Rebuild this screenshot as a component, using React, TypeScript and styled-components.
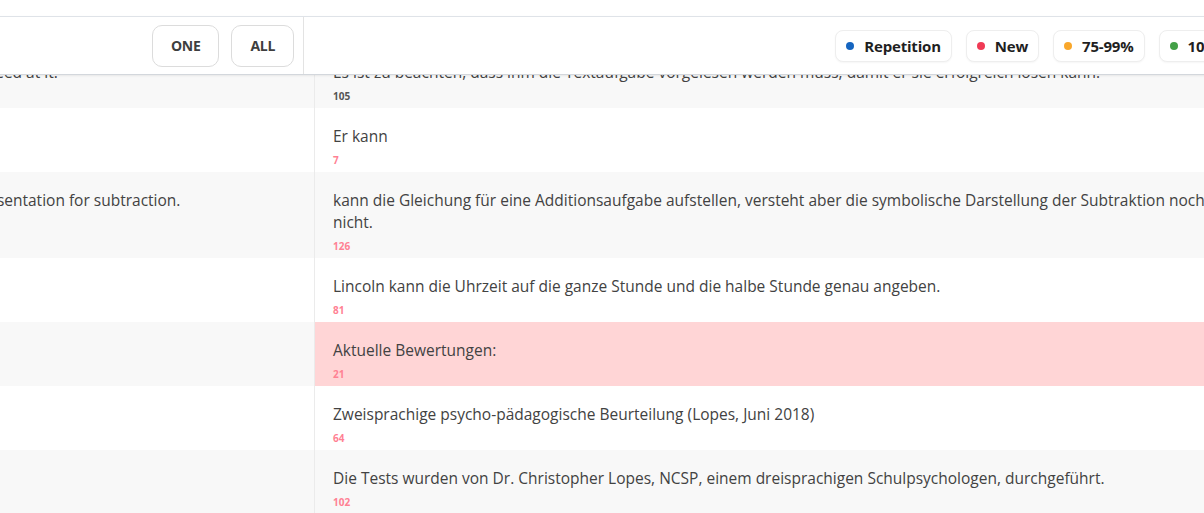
import React, { useLayoutEffect, useRef } from "react";
import styled, { createGlobalStyle } from "styled-components";

const SCROLL_X = 717;
const SCROLL_Y = 31;
const VISIBLE_RIGHT = 1250;
const HEAD_LEFT = 303;
const BODY_LEFT = 314;

const GlobalStyle = createGlobalStyle`
  * { box-sizing: border-box; }
  html, body { margin: 0; padding: 0; background: #ffffff; }
  body {
    font-family: "Open Sans", "Noto Sans", sans-serif;
    color: #444;
    -webkit-font-smoothing: antialiased;
  }
`;

const Scroller = styled.div`
  height: 100vh;
  width: 100vw;
  overflow: auto;
  scrollbar-width: none;
  &::-webkit-scrollbar { display: none; }
`;

const Canvas = styled.div<{ $width: number }>`
  width: ${(p) => p.$width}px;
`;

const StickyHead = styled.header`
  position: sticky;
  top: 0;
  z-index: 2;
  background: #fff;
  padding-top: 16px;
`;

const Toolbar = styled.div<{ $left: number }>`
  display: grid;
  grid-template-columns: ${(p) => p.$left}px 1fr;
  height: 59px;
  border-top: 1px solid #dfe3e8;
  border-bottom: 1px solid #d3d7dc;
  box-shadow: 0 1px 2px rgba(0, 0, 0, 0.07);
  background: #fff;
`;

const ModeGroup = styled.div`
  display: flex;
  align-items: center;
  justify-content: flex-end;
  gap: 12px;
  padding-right: 9px;
  border-right: 1px solid #e3e3e3;
`;

const ModeButton = styled.button`
  height: 42px;
  padding: 0 18px;
  border: 1px solid #dcdcdc;
  border-radius: 10px;
  background: #fff;
  font-family: "Open Sans", sans-serif;
  font-weight: 700;
  font-size: 14px;
  color: #3e3e3e;
  letter-spacing: -0.3px;
  cursor: pointer;
`;

const Legend = styled.div`
  display: flex;
  align-items: center;
  justify-content: flex-end;
  gap: 14px;
  padding-right: 13px;
`;

const Chip = styled.div`
  display: flex;
  align-items: center;
  gap: 10px;
  height: 32px;
  padding: 0 10px;
  border: 1px solid #eeeeee;
  border-radius: 8px;
  background: #fff;
  box-shadow: 0 1px 2px rgba(0, 0, 0, 0.04);
  font-weight: 700;
  font-size: 15px;
  color: #1f1f1f;
  letter-spacing: -0.2px;
`;

const Dot = styled.span<{ $color: string }>`
  width: 8px;
  height: 8px;
  border-radius: 50%;
  background: ${(p) => p.$color};
  flex: none;
`;

const Table = styled.div<{ $left: number }>`
  display: grid;
  grid-template-columns: ${(p) => p.$left}px 1fr;
`;

const Cell = styled.div<{ $bg: string; $divider?: boolean }>`
  background: ${(p) => p.$bg};
  padding: 17px 18px 5px 18px;
  border-right: ${(p) => (p.$divider ? "1px solid #ebebeb" : "none")};
  font-size: 15.5px;
  line-height: 22px;
  color: #424242;
`;

const Count = styled.div<{ $muted?: boolean }>`
  margin-top: 6px;
  font-size: 10px;
  line-height: 14px;
  font-weight: 700;
  color: ${(p) => (p.$muted ? "#555" : "#ff8193")};
`;

type Row = {
  source: string;
  target: string;
  count: number;
  muted?: boolean;
  highlight?: boolean;
};

const rows: Row[] = [
  {
    source:
      "It is important to note that the word problem must be read aloud to him in order for him to succeed at it.",
    target:
      "Es ist zu beachten, dass ihm die Textaufgabe vorgelesen werden muss, damit er sie erfolgreich lösen kann.",
    count: 105,
    muted: true,
  },
  { source: "He can", target: "Er kann", count: 7 },
  {
    source:
      "can set up the equation for an addition problem but does not yet understand the symbolic representation for subtraction.",
    target:
      "kann die Gleichung für eine Additionsaufgabe aufstellen, versteht aber die symbolische Darstellung der Subtraktion noch nicht.",
    count: 126,
  },
  {
    source: "Lincoln can tell time to the hour and half hour accurately.",
    target: "Lincoln kann die Uhrzeit auf die ganze Stunde und die halbe Stunde genau angeben.",
    count: 81,
  },
  { source: "Current Assessments:", target: "Aktuelle Bewertungen:", count: 21, highlight: true },
  {
    source: "Bilingual Psycho-educational Evaluation (Lopes, June 2018)",
    target: "Zweisprachige psycho-pädagogische Beurteilung (Lopes, Juni 2018)",
    count: 64,
  },
  {
    source: "Testing was conducted by Dr. Christopher Lopes, NCSP, a trilingual school psychologist.",
    target:
      "Die Tests wurden von Dr. Christopher Lopes, NCSP, einem dreisprachigen Schulpsychologen, durchgeführt.",
    count: 102,
  },
  {
    source: "Tests administered:",
    target: "Durchgeführte Tests:",
    count: 20,
  },
];

const legend = [
  { label: "Repetition", color: "#1565c0" },
  { label: "New", color: "#f03a55" },
  { label: "75-99%", color: "#f9a72b" },
  { label: "100%", color: "#43a047" },
];

export default function App() {
  const ref = useRef<HTMLDivElement>(null);
  useLayoutEffect(() => {
    if (ref.current) {
      ref.current.scrollLeft = SCROLL_X;
      ref.current.scrollTop = SCROLL_Y;
    }
  }, []);

  return (
    <>
      <GlobalStyle />
      <Scroller ref={ref}>
        <Canvas $width={SCROLL_X + VISIBLE_RIGHT}>
          <StickyHead>
            <Toolbar $left={SCROLL_X + HEAD_LEFT + 1}>
              <ModeGroup>
                <ModeButton>ONE</ModeButton>
                <ModeButton>ALL</ModeButton>
              </ModeGroup>
              <Legend>
                {legend.map((l) => (
                  <Chip key={l.label}>
                    <Dot $color={l.color} />
                    {l.label}
                  </Chip>
                ))}
              </Legend>
            </Toolbar>
          </StickyHead>
          <Table $left={SCROLL_X + BODY_LEFT + 1}>
            {rows.map((r, i) => {
              const base = i % 2 === 0 ? "#f8f8f8" : "#ffffff";
              return (
                <React.Fragment key={i}>
                  <Cell $bg={base} $divider>
                    {r.source}
                  </Cell>
                  <Cell $bg={r.highlight ? "#ffd5d6" : base}>
                    {r.target}
                    <Count $muted={r.muted}>{r.count}</Count>
                  </Cell>
                </React.Fragment>
              );
            })}
          </Table>
        </Canvas>
      </Scroller>
    </>
  );
}
